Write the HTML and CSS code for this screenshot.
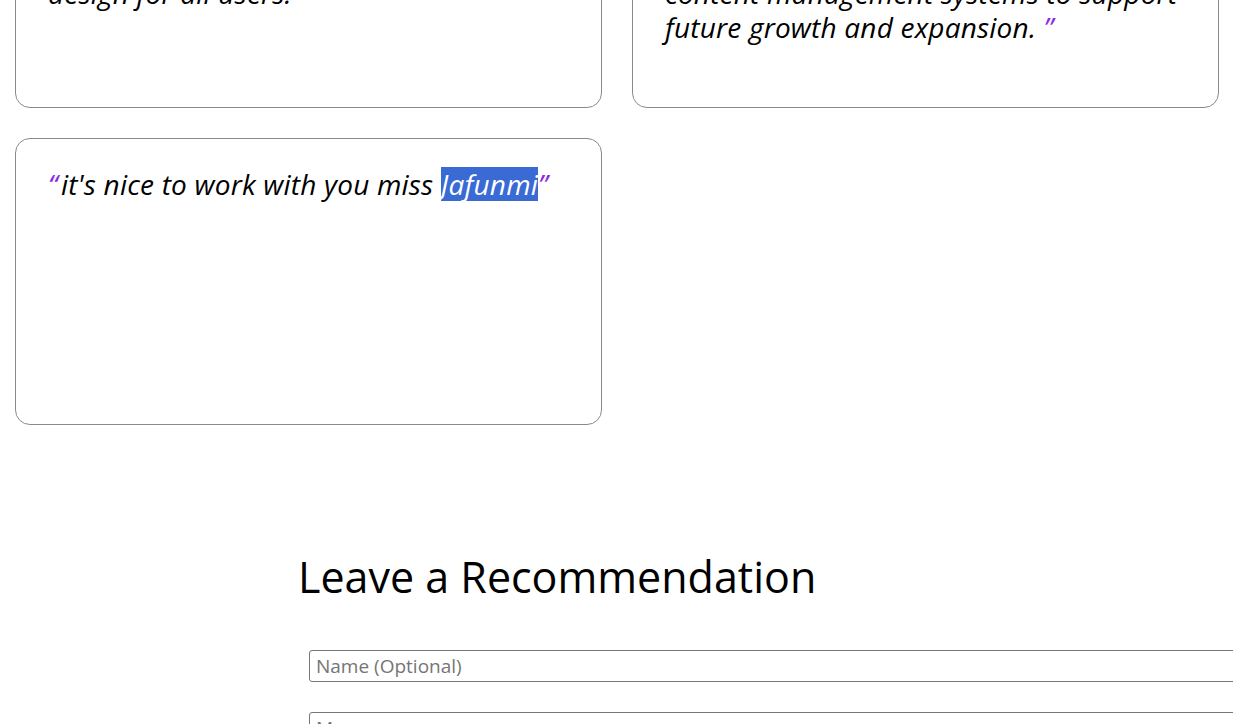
FILE: index.html
```html
<!DOCTYPE html>
<html lang="en">
<head>
<meta charset="utf-8">
<title>Recommendations</title>
<link rel="stylesheet" href="styles.css">
</head>
<body>
<section class="recs">
  <div class="card">
    <p class="quote"><span class="mark open">“</span>She built clean, well structured<br>pages with close attention to<br>every detail, keeping the layout<br>consistent with an accessible<br>design for all users.<span class="mark">”</span></p>
  </div>
  <div class="card">
    <p class="quote"><span class="mark open">“</span>Her work on our company website<br>was outstanding. She delivered<br>fast, reliable pages and set up<br>a clear structure with simple<br>content management systems to support<br>future growth and expansion. <span class="mark">”</span></p>
  </div>
  <div class="card">
    <p class="quote"><span class="mark open">“</span>it's nice to work with you miss <span class="sel">Jafunmi</span><span class="mark">”</span></p>
  </div>
</section>

<section class="leave">
  <h2 class="leave-title">Leave a Recommendation</h2>
  <form class="leave-form">
    <input class="field" type="text" placeholder="Name (Optional)">
    <textarea class="field area" placeholder="Message"></textarea>
  </form>
</section>
</body>
</html>
```

FILE: styles.css
```css
html, body {
  margin: 0;
  padding: 0;
  background: #ffffff;
  overflow: hidden;
}

body {
  font-family: "Open Sans", "DejaVu Sans", sans-serif;
  color: #000000;
}

.recs {
  display: grid;
  grid-template-columns: 587px 587px;
  column-gap: 30px;
  row-gap: 30px;
  padding: 0 15px;
  margin-top: -189px;
}

.card {
  box-sizing: border-box;
  min-height: 287px;
  border: 1px solid #8a8a8a;
  border-radius: 15px;
  padding: 28px 31px 63px 32px;
}

.quote {
  margin: 0;
  font-size: 28px;
  line-height: 34px;
  font-style: italic;
  letter-spacing: 0.2px;
}

.mark {
  color: #8a2be2;
}

.mark.open {
  margin-right: 3px;
}

.sel {
  display: inline-block;
  line-height: 34px;
  background: #3a6ad4;
  color: #ffffff;
}

.leave {
  margin-top: 124px;
  padding-left: 298px;
}

.leave-title {
  margin: 0 0 45px;
  font-size: 43px;
  font-weight: normal;
  line-height: 56px;
}

.leave-form {
  display: flex;
  flex-direction: column;
  gap: 30px;
  padding-left: 11px;
}

.field {
  box-sizing: border-box;
  width: 1000px;
  height: 32px;
  margin: 0;
  padding: 2px 6px;
  border: 1px solid #767676;
  border-radius: 3px;
  font-family: inherit;
  font-size: 19px;
  color: #000;
}

.field::placeholder {
  color: #757575;
}

.area {
  height: 120px;
  resize: none;
}
```
